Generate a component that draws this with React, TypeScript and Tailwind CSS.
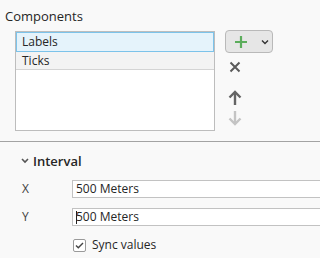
import React from "react";

const font = { fontFamily: '"Open Sans", "Noto Sans", sans-serif' };

const App = () => {
  return (
    <div className="w-[320px] h-[258px] overflow-hidden bg-[#f9f9f9] text-[#262626]" style={font}>
      {/* Components section */}
      <div className="pl-[5px] pt-[7px] text-[13px] leading-[18px]">Components</div>
      <div className="flex mt-[6px] ml-[15px]">
        <div className="w-[200px] h-[100px] border border-[#bdbdbd] bg-white flex flex-col">
          <div className="h-[20px] border border-[#7cc3ea] bg-[#e5f3fb] pl-[5px] text-[12px] leading-[18px]">Labels</div>
          <div className="h-[18px] border-b border-[#d4d4d4] bg-[#f3f3f3] pl-[6px] text-[12px] leading-[17px]">Ticks</div>
        </div>
        <div className="flex flex-col ml-[10px] -mt-[1px]">
          <div className="w-[48px] h-[23px] rounded-[4px] border border-[#b9b9b9] bg-[#e6e6e6] flex items-center pl-[7px]">
            <svg width="16" height="16" viewBox="0 0 16 16">
              <path d="M8 2v12M2 8h12" stroke="#5cad5c" strokeWidth="2.2" />
            </svg>
            <svg width="10" height="10" viewBox="0 0 10 10" className="ml-[11px]">
              <path d="M2 3.5l3 3 3-3" stroke="#333" strokeWidth="1.4" fill="none" />
            </svg>
          </div>
          <svg width="12" height="12" viewBox="0 0 12 12" className="ml-[4px] mt-[8px]">
            <path d="M1.5 1.5l9 9M10.5 1.5l-9 9" stroke="#5a5a5a" strokeWidth="2" />
          </svg>
          <svg width="14" height="16" viewBox="0 0 14 16" className="ml-[3px] mt-[17px]">
            <path d="M7 15V3" stroke="#646464" strokeWidth="2.4" />
            <path d="M1.5 7.5L7 2l5.5 5.5" stroke="#646464" strokeWidth="2.4" fill="none" />
          </svg>
          <svg width="14" height="16" viewBox="0 0 14 16" className="ml-[3px] mt-[4px]">
            <path d="M7 1v12" stroke="#c4c4c4" strokeWidth="2.4" />
            <path d="M1.5 8.5L7 14l5.5-5.5" stroke="#c4c4c4" strokeWidth="2.4" fill="none" />
          </svg>
        </div>
      </div>

      <div className="mt-[10px] h-px bg-[#a3a3a3]" />

      {/* Interval section */}
      <div className="flex items-center mt-[11px] pl-[21px] h-[16px]">
        <svg width="8" height="6" viewBox="0 0 8 6">
          <path d="M1 1l3 3 3-3" stroke="#555" strokeWidth="1.6" fill="none" />
        </svg>
        <span className="ml-[4px] text-[13px] font-semibold leading-[16px]">Interval</span>
      </div>

      <div className="flex items-center mt-[11px] h-[18px]">
        <span className="w-[72px] pl-[22px] text-[12px] text-[#404040]">X</span>
        <div className="flex-1 h-[18px] border-y border-l border-[#c2c2c2] bg-white pl-[3px] text-[12px] leading-[16px]">500 Meters</div>
      </div>
      <div className="flex items-center mt-[10px] h-[18px]">
        <span className="w-[72px] pl-[22px] text-[12px] text-[#404040]">Y</span>
        <div className="flex-1 h-[18px] border-y border-l border-[#c2c2c2] bg-white pl-[3px] text-[12px] leading-[16px] flex items-center">
          <span className="w-px h-[13px] bg-[#222] -mr-px" />
          <span>500 Meters</span>
        </div>
      </div>

      <div className="flex items-center mt-[12px] pl-[73px]">
        <div className="w-[13px] h-[13px] border border-[#9a9a9a] rounded-[2px] bg-white flex items-center justify-center">
          <svg width="9" height="9" viewBox="0 0 9 9">
            <path d="M1 4.5l2.3 2.3L8 2" stroke="#444" strokeWidth="1.4" fill="none" />
          </svg>
        </div>
        <span className="ml-[6px] text-[12px] leading-[14px]">Sync values</span>
      </div>
    </div>
  );
};

export default App;
